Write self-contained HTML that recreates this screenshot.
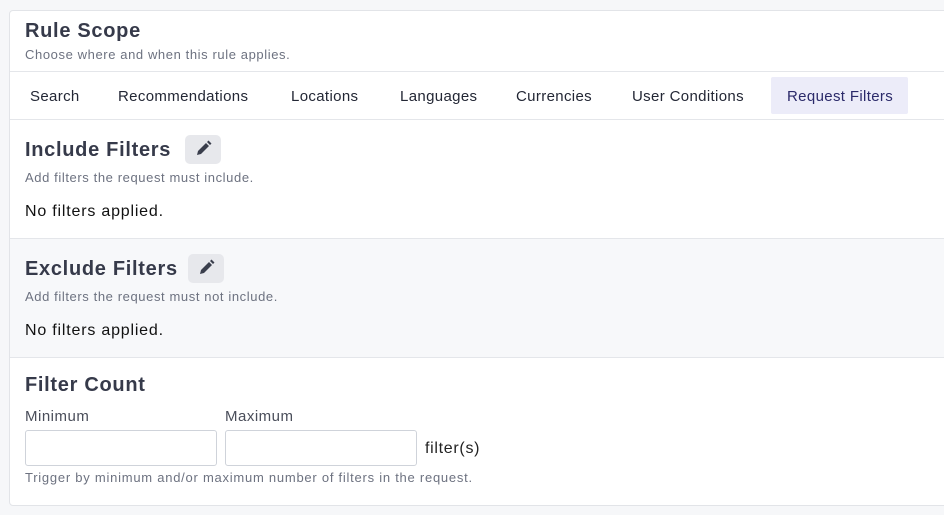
<!DOCTYPE html>
<html><head><style>
*{margin:0;padding:0;box-sizing:border-box}
body{width:944px;height:515px;background:#f6f7f9;font-family:"Liberation Sans",sans-serif;position:relative;overflow:hidden;color:#1f2330}
.card{position:absolute;left:9px;top:10px;width:960px;height:496px;background:#fff;border:1px solid #e2e4e8;border-radius:4px}
.a{position:absolute;white-space:nowrap}
.h{font-weight:bold;color:#363a4a;font-size:20px;letter-spacing:0.7px}
.sub{font-size:13px;color:#6d7280;letter-spacing:0.6px}
.tab{position:absolute;top:88px;font-size:15px;color:#232735;letter-spacing:0.35px}
.line{position:absolute;left:10px;width:934px;height:1px;background:#e4e6ea}
.btn{position:absolute;width:36px;height:29px;background:#e7e8ec;border-radius:5px}
.inp{position:absolute;top:430px;width:192px;height:36px;border:1px solid #cfd3da;border-radius:3px;background:#fff}
.nf{font-size:16px;color:#111;letter-spacing:0.8px}
</style></head><body>
<div class="card"></div>
<div class="a h" style="left:25px;top:20px">Rule Scope</div>
<div class="a sub" style="left:25px;top:47px">Choose where and when this rule applies.</div>
<div class="line" style="top:71px"></div>
<div style="position:absolute;left:771px;top:77px;width:137px;height:37px;background:#ececf9;border-radius:2px"></div>
<div class="tab" style="left:30px">Search</div>
<div class="tab" style="left:118px">Recommendations</div>
<div class="tab" style="left:291px">Locations</div>
<div class="tab" style="left:400px">Languages</div>
<div class="tab" style="left:516px">Currencies</div>
<div class="tab" style="left:632px">User Conditions</div>
<div class="tab" style="left:787px;color:#2b2a6a">Request Filters</div>
<div class="line" style="top:119px"></div>
<div class="a h" style="left:25px;top:139px">Include Filters</div>
<div class="btn" style="left:185px;top:135px"><svg width="36" height="29" viewBox="0 0 36 29"><path d="M12 20l1-4 8-8 3 3-8 8z M22 7l1.5-1.5 3 3L25 10z" fill="#3a3e4c"/></svg></div>
<div class="a sub" style="left:25px;top:170px">Add filters the request must include.</div>
<div class="a nf" style="left:25px;top:203px">No filters applied.</div>
<div style="position:absolute;left:10px;top:238px;width:934px;height:120px;background:#f7f8fa;border-top:1px solid #e4e6ea;border-bottom:1px solid #e4e6ea"></div>
<div class="a h" style="left:25px;top:258px">Exclude Filters</div>
<div class="btn" style="left:188px;top:254px"><svg width="36" height="29" viewBox="0 0 36 29"><path d="M12 20l1-4 8-8 3 3-8 8z M22 7l1.5-1.5 3 3L25 10z" fill="#3a3e4c"/></svg></div>
<div class="a sub" style="left:25px;top:289px">Add filters the request must not include.</div>
<div class="a nf" style="left:25px;top:322px">No filters applied.</div>
<div class="a h" style="left:25px;top:374px">Filter Count</div>
<div class="a" style="left:25px;top:408px;font-size:15px;color:#4a4e5a;letter-spacing:0.5px">Minimum</div>
<div class="a" style="left:225px;top:408px;font-size:15px;color:#4a4e5a;letter-spacing:0.5px">Maximum</div>
<div class="inp" style="left:25px"></div>
<div class="inp" style="left:225px"></div>
<div class="a" style="left:425px;top:440px;font-size:16px;color:#222;letter-spacing:0.7px">filter(s)</div>
<div class="a sub" style="left:25px;top:470px;letter-spacing:0.75px">Trigger by minimum and/or maximum number of filters in the request.</div>
</body></html>
